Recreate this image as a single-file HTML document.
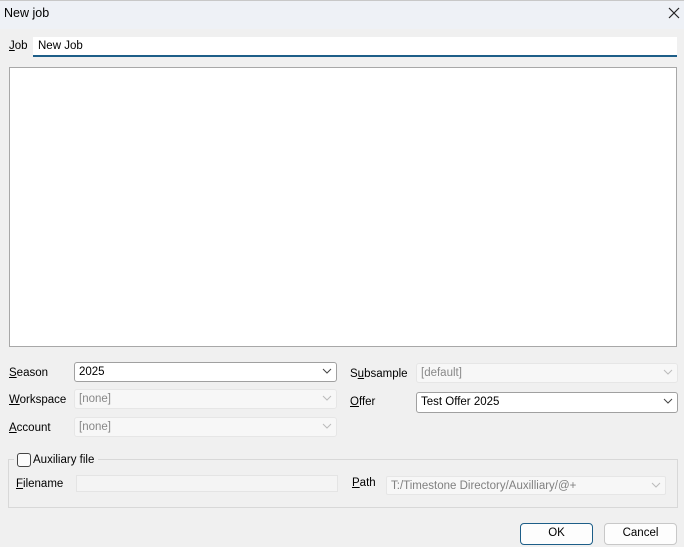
<!DOCTYPE html>
<html><head><style>
body{margin:0;width:684px;height:547px;background:#f0f0f0;font-family:"Liberation Sans",sans-serif;font-size:11.5px;color:#000;position:relative;overflow:hidden}
.a{position:absolute}
.lbl{position:absolute;line-height:14px}
.cb{position:absolute;box-sizing:border-box;border:1px solid #a0a0a0;background:#fff;border-radius:3px;padding-left:4px;line-height:18px}
.cb.d{border-color:#e6e6e6;background:#f7f7f7;color:#888}
.ch{position:absolute;right:4px;top:5px;width:10px;height:6px}
.btn{position:absolute;box-sizing:border-box;border:1px solid #c8c8c8;background:#fdfdfd;border-radius:4px;text-align:center;line-height:19px}
</style></head><body>
<div class="a" style="left:0;top:0;width:684px;height:28px;background:#eef1f6;border-top:1px solid #c8c8c8"></div>
<div class="lbl" style="left:4px;top:6px;font-size:12.5px">New job</div>
<svg class="a" style="left:668px;top:7px" width="12" height="12"><path d="M1 1L11 11M11 1L1 11" stroke="#222" stroke-width="1.2"/></svg>
<div class="lbl" style="left:9px;top:39px"><u>J</u>ob</div>
<div class="a" style="left:33px;top:37px;width:644px;height:18px;background:#fff;border-bottom:2px solid #1d5e88"></div>
<div class="lbl" style="left:38px;top:39px">New Job</div>
<div class="a" style="left:9px;top:67px;width:666px;height:278px;background:#fff;border:1px solid #a8a8a8"></div>

<div class="lbl" style="left:9px;top:366px"><u>S</u>eason</div>
<div class="cb" style="left:74px;top:362px;width:263px;height:20px">2025<svg class="ch" viewBox="0 0 10 6"><path d="M1 1L5 5L9 1" stroke="#444" fill="none"/></svg></div>
<div class="lbl" style="left:9px;top:393px"><u>W</u>orkspace</div>
<div class="cb d" style="left:74px;top:389px;width:263px;height:20px">[none]<svg class="ch" viewBox="0 0 10 6"><path d="M1 1L5 5L9 1" stroke="#bbb" fill="none"/></svg></div>
<div class="lbl" style="left:9px;top:421px"><u>A</u>ccount</div>
<div class="cb d" style="left:74px;top:417px;width:263px;height:20px">[none]<svg class="ch" viewBox="0 0 10 6"><path d="M1 1L5 5L9 1" stroke="#bbb" fill="none"/></svg></div>

<div class="lbl" style="left:350px;top:367px">S<u>u</u>bsample</div>
<div class="cb d" style="left:416px;top:363px;width:262px;height:20px">[default]<svg class="ch" viewBox="0 0 10 6"><path d="M1 1L5 5L9 1" stroke="#bbb" fill="none"/></svg></div>
<div class="lbl" style="left:350px;top:395px"><u>O</u>ffer</div>
<div class="cb" style="left:416px;top:392px;width:262px;height:21px">Test Offer 2025<svg class="ch" viewBox="0 0 10 6"><path d="M1 1L5 5L9 1" stroke="#444" fill="none"/></svg></div>

<div class="a" style="left:8px;top:459px;width:670px;height:49px;border:1px solid #d8d8d8;box-sizing:border-box"></div>
<div class="a" style="left:14px;top:452px;width:84px;height:14px;background:#f0f0f0"></div>
<div class="a" style="left:17px;top:453px;width:12px;height:12px;border:1px solid #444;border-radius:3px;background:#fbfbfb"></div>
<div class="lbl" style="left:33px;top:453px">Auxiliary file</div>
<div class="lbl" style="left:16px;top:477px"><u>F</u>ilename</div>
<div class="a" style="left:76px;top:475px;width:262px;height:17px;background:#f4f4f4;border:1px solid #e4e4e4;box-sizing:border-box"></div>
<div class="lbl" style="left:352px;top:476px"><u>P</u>ath</div>
<div class="cb d" style="left:386px;top:476px;width:280px;height:19px;border-radius:2px;color:#808080">T:/Timestone Directory/Auxilliary/@+<svg class="ch" viewBox="0 0 10 6"><path d="M1 1L5 5L9 1" stroke="#bbb" fill="none"/></svg></div>

<div class="btn" style="left:520px;top:523px;width:73px;height:22px;border-color:#1d5e88">OK</div>
<div class="btn" style="left:604px;top:523px;width:73px;height:22px">Cancel</div>
</body></html>
